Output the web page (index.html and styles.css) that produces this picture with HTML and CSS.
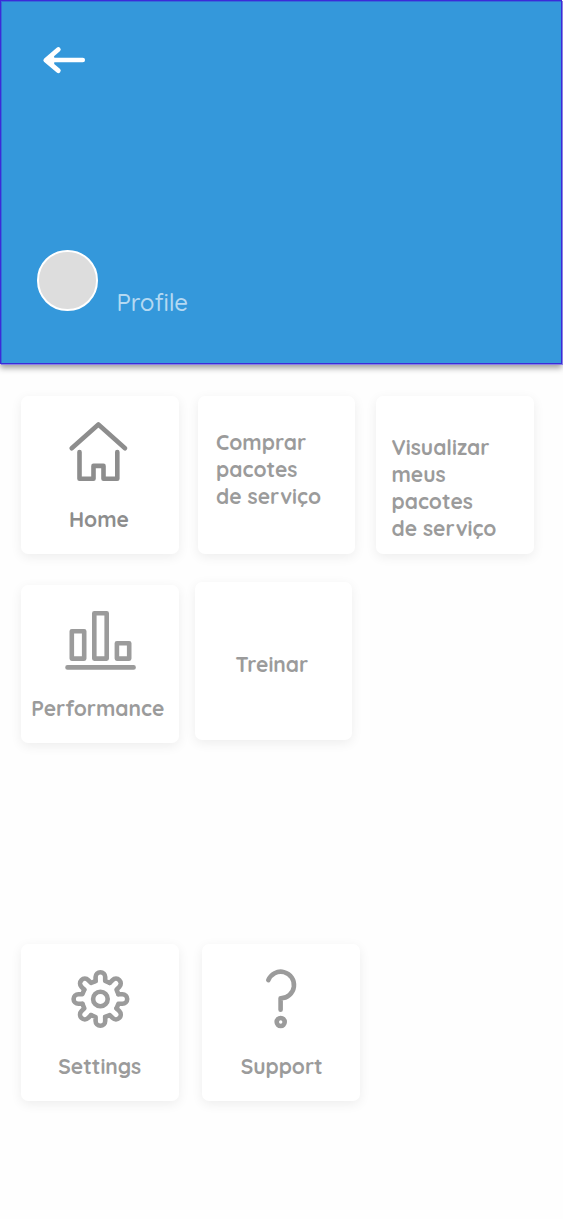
FILE: index.html
```html
<!DOCTYPE html>
<html lang="pt">
<head>
<meta charset="utf-8">
<title>Profile</title>
<link rel="stylesheet" href="styles.css">
</head>
<body>
<header class="hero">
  <svg class="back" width="44" height="30" viewBox="42 45 44 30"><path class="back-head" d="M58.3 49.5 45.8 60.2 58.3 70.7"/><path d="M47 60.1H82.8M52 57 48 60.2 52 63.3Z"/></svg>
  <div class="user"><div class="avatar"></div><span class="user-name">Profile</span></div>
</header>
<main class="menu">
  <section class="row row-top">
    <a class="card card-home">
      <svg class="icon" width="62" height="64" viewBox="67 420 62 64"><path d="M71.7 448.2 98.4 424.5 125 448.2M79.5 452V478.8H93.5V465.9H103.5V478.8H117.3V452"/></svg>
      <span class="label">Home</span>
    </a>
    <a class="card card-buy"><span class="label">Comprar<br>pacotes<br>de serviço</span></a>
    <a class="card card-view"><span class="label">Visualizar<br>meus<br>pacotes<br>de serviço</span></a>
  </section>
  <section class="row row-middle">
    <a class="card card-performance">
      <svg class="icon" width="74" height="64" viewBox="63 609 74 64"><path d="M71.8 631.2H84.2V658.6H71.8ZM94.3 613.2H106.7V658.6H94.3ZM116.9 643.2H129.2V658.6H116.9ZM67.5 667.4H133.6"/></svg>
      <span class="label">Performance</span>
    </a>
    <a class="card card-train"><span class="label">Treinar</span></a>
  </section>
  <section class="row row-bottom">
    <a class="card card-settings">
      <svg class="icon" width="64" height="64" viewBox="-32.4 -31 64 64">
        <defs><path id="tooth" d="M-4.8-18V-22A4.8 4.8 0 0 1 4.8-22V-18L9.3-16.1"/></defs>
        <use href="#tooth"/><use href="#tooth" transform="rotate(45)"/><use href="#tooth" transform="rotate(90)"/><use href="#tooth" transform="rotate(135)"/><use href="#tooth" transform="rotate(180)"/><use href="#tooth" transform="rotate(225)"/><use href="#tooth" transform="rotate(270)"/><use href="#tooth" transform="rotate(315)"/>
        <circle r="7.3"/>
      </svg>
      <span class="label">Settings</span>
    </a>
    <a class="card card-support">
      <svg class="icon" width="40" height="64" viewBox="261 968 40 64"><path d="M268.3 980.2A13.3 13.3 0 1 1 280.6 998.3V1009.8"/><circle cx="280.7" cy="1022" r="4"/></svg>
      <span class="label">Support</span>
    </a>
  </section>
</main>
</body>
</html>
```
FILE: styles.css
```css
* { box-sizing: border-box; }
body {
  margin: 0;
  min-height: 1219px;
  background: #fefefe;
  font-family: Quicksand, Lato, sans-serif;
}
svg { display: block; fill: none; stroke-linecap: round; stroke-linejoin: round; }
.hero {
  width: 562px;
  height: 364px;
  padding: 44px 0 0 36px;
  border: 1px solid #3b2bd8;
  background: #3498db;
  box-shadow: inset 1px 1px 0 rgba(59, 43, 216, .4), 1px 1px 0 #8a80e2, 0 4px 6px rgba(0, 0, 0, .38);
}
.back { margin-left: 4.5px; stroke: #fff; stroke-width: 4.5; }
.back-head { stroke-width: 4.8; }
.user { display: flex; align-items: flex-start; margin-top: 175px; }
.avatar { width: 60.5px; height: 60.5px; margin: .3px 0 0 .3px; border: 2px solid #fff; border-radius: 50%; background: #ddd; }
.user-name { margin: 36.5px 0 0 18.8px; color: #b4d9f2; font-size: 24px; font-weight: 500; line-height: 30px; letter-spacing: -.1px; }
.menu { padding: 32px 0 0 21px; }
.row { display: flex; }
.row-top { gap: 20px; }
.row-middle { gap: 16.5px; margin-top: 28.5px; }
.row-bottom { gap: 24px; margin-top: 201px; }
.card {
  flex: none;
  display: flex;
  flex-direction: column;
  align-items: center;
  width: 157.5px;
  height: 157.5px;
  border-radius: 7px;
  background: #fff;
  color: #9b9b9b;
  box-shadow: 0 3px 12px rgba(0, 0, 0, .07);
}
.icon { margin-top: 24px; stroke: #9b9b9b; stroke-width: 4.6; }
.label { font-size: 21px; font-weight: 700; line-height: 27px; white-space: nowrap; }
.icon + .label { margin-top: 21.5px; }
.card-home { color: #8d8d8d; }
.card-home .icon { margin-right: 3.5px; stroke: #8d8d8d; }
.card-home .label { margin-right: 1.5px; }
.card-buy { margin-left: -.6px; align-items: flex-start; padding: 32.8px 0 0 18.2px; }
.card-view { align-items: flex-start; padding: 38px 0 0 15.5px; }
.card-performance { margin-top: 3px; }
.card-performance .label { margin-right: 4px; }
.card-train { margin-left: -.2px; padding: 69px 3.5px 0 0; }
.card-settings .icon { margin-left: 1px; }
.card-support { margin-left: -.2px; }
.card-support .label { margin-left: 1.2px; }
.card-buy + .card-view { margin-left: .6px; }
```
